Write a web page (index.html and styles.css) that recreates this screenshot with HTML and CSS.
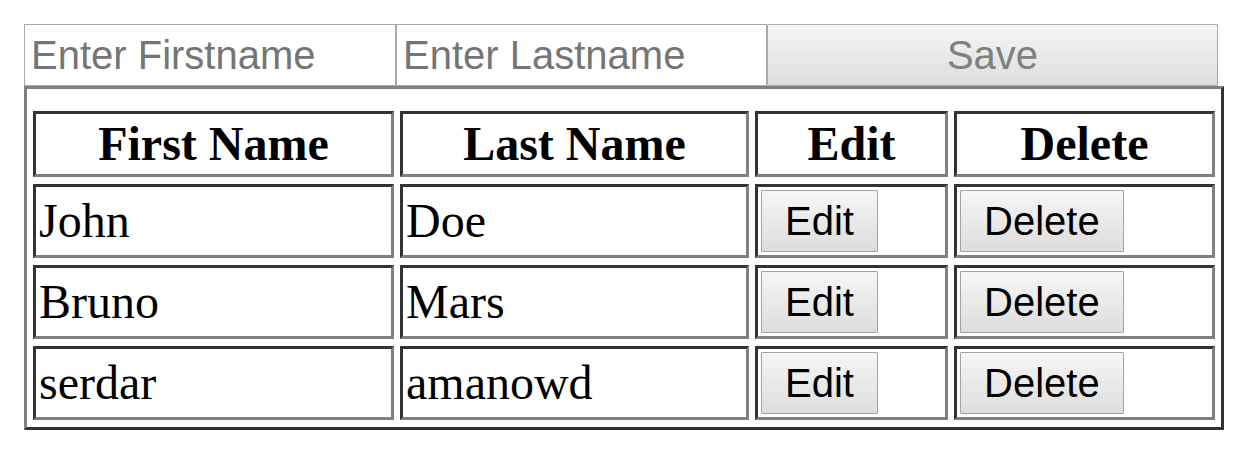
FILE: index.html
```html
<!DOCTYPE html>
<html>
<head>
<meta charset="utf-8">
<title>Users</title>
<link rel="stylesheet" href="styles.css">
</head>
<body>
<form class="entry">
  <input class="field field-first" type="text" placeholder="Enter Firstname">
  <input class="field field-last" type="text" placeholder="Enter Lastname">
  <button class="btn btn-save" type="button">Save</button>
</form>
<table class="people">
  <colgroup>
    <col class="c1"><col class="c2"><col class="c3"><col class="c4">
  </colgroup>
  <thead>
    <tr><th>First Name</th><th>Last Name</th><th>Edit</th><th>Delete</th></tr>
  </thead>
  <tbody>
    <tr><td>John</td><td>Doe</td><td><button class="btn" type="button">Edit</button></td><td><button class="btn" type="button">Delete</button></td></tr>
    <tr><td>Bruno</td><td>Mars</td><td><button class="btn" type="button">Edit</button></td><td><button class="btn" type="button">Delete</button></td></tr>
    <tr><td>serdar</td><td>amanowd</td><td><button class="btn" type="button">Edit</button></td><td><button class="btn" type="button">Delete</button></td></tr>
  </tbody>
</table>
</body>
</html>
```
FILE: styles.css
```css
html, body {
  background: #ffffff;
}
body {
  margin: 24px 8px 0 24px;
  font-family: "Liberation Serif", "Times New Roman", serif;
  font-size: 48px;
  color: #000;
}
.entry {
  display: flex;
  width: 1194px;
  margin: 0;
}
.field {
  box-sizing: border-box;
  flex: none;
  height: 62px;
  margin: 0;
  padding: 0 6px;
  border: 1px solid #a9a9a9;
  border-radius: 0;
  font-family: "Liberation Sans", Arial, sans-serif;
  font-size: 40px;
  color: #000;
  background: #fff;
  outline: none;
}
.field::placeholder {
  color: #757575;
  opacity: 1;
}
.field-first { width: 372px; }
.field-last { width: 371px; }
.btn {
  box-sizing: border-box;
  margin: 0;
  padding: 7px 23px;
  border: 1px solid #a3a3a3;
  border-radius: 1px;
  background: linear-gradient(#f6f6f6, #dddddd);
  font-family: "Liberation Sans", Arial, sans-serif;
  font-size: 40px;
  line-height: 46px;
  color: #000;
}
.btn-save {
  flex: none;
  width: 451px;
  height: 62px;
  color: #808080;
  border-color: #aaaaaa;
}
.people {
  box-sizing: border-box;
  width: 1200px;
  table-layout: fixed;
  border-collapse: separate;
  border-spacing: 6px 7px;
  padding-top: 15px;
  border: 3px solid;
  border-color: #808080 #333333 #333333 #808080;
}
.c1 { width: 361px; }
.c2 { width: 349px; }
.c3 { width: 193px; }
.c4 { width: 261px; }
.people th,
.people td {
  box-sizing: border-box;
  padding: 3px;
  border: 3px solid;
  border-color: #333333 #808080 #808080 #333333;
  vertical-align: middle;
  line-height: 54px;
}
.people th {
  font-weight: bold;
  text-align: center;
}
.people td {
  text-align: left;
}
.people td .btn {
  display: block;
}
```
